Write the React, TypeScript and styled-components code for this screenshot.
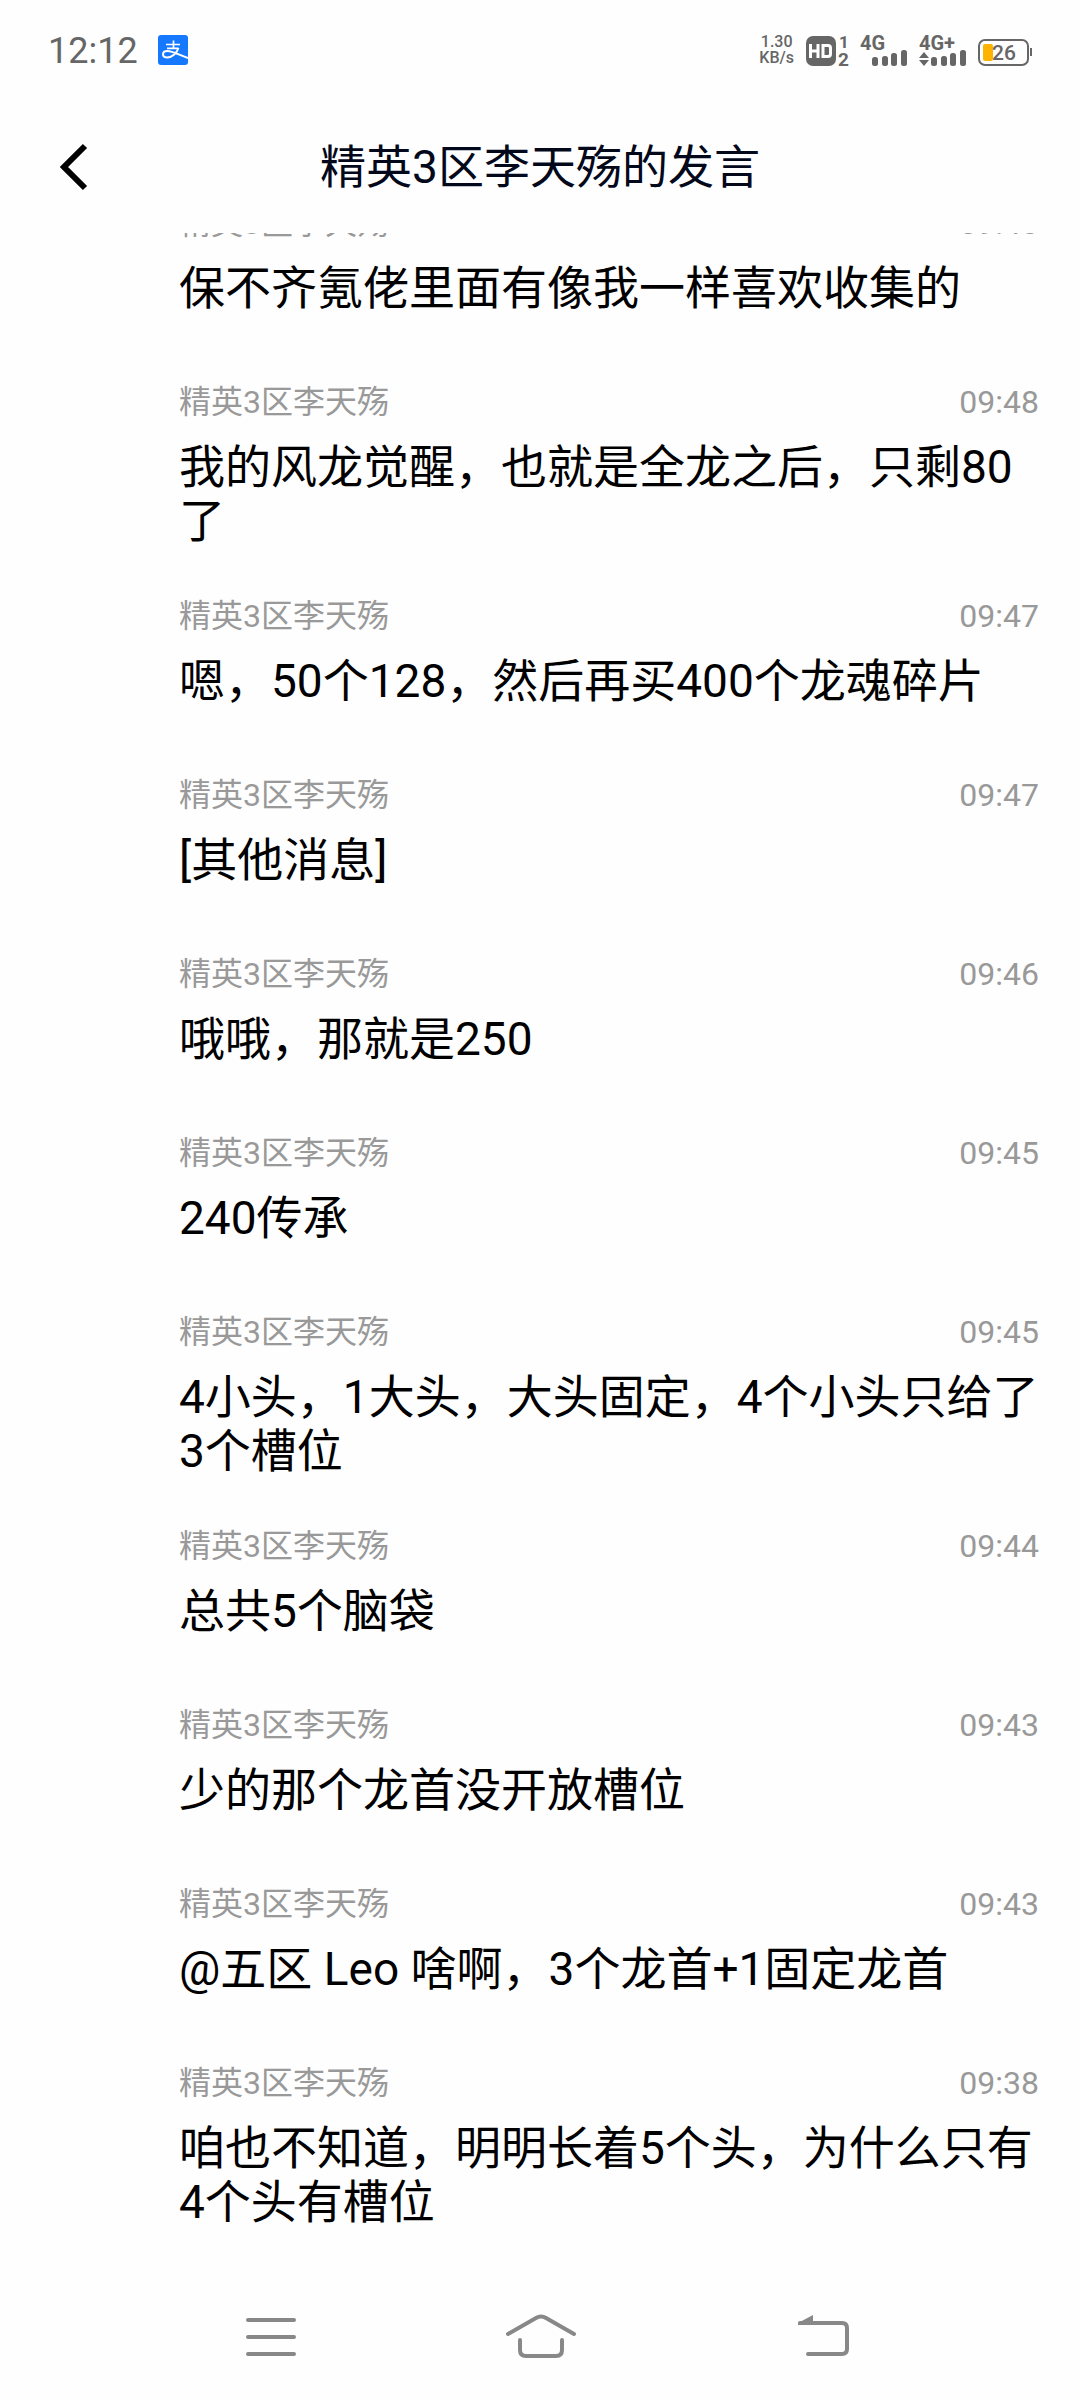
import React from "react";
import styled, { createGlobalStyle } from "styled-components";

const GlobalStyle = createGlobalStyle`
  * { box-sizing: border-box; }
  body { margin: 0; background: #fefefe; }
`;

const Screen = styled.div`
  display: flex;
  flex-direction: column;
  min-height: 100vh;
  background: #fefefe;
  font-family: Roboto, "Noto Sans CJK SC", sans-serif;
  color: #000;
`;

const StatusBar = styled.div`
  display: flex;
  align-items: center;
  justify-content: space-between;
  height: 100px;
  padding: 0 48px;
  color: #666;
`;

const StatusGroup = styled.div<{ $gap: number }>`
  display: flex;
  align-items: center;
  gap: ${(p) => p.$gap}px;
`;

const Clock = styled.time`
  padding-top: 1px;
  font-size: 36px;
  line-height: 44px;
`;

const NetSpeed = styled.div`
  display: flex;
  flex-direction: column;
  align-items: center;
  font-size: 16px;
  line-height: 16px;
  font-weight: 500;
`;

const Icon = styled.svg`
  display: block;
  flex: none;
  overflow: visible;
`;

const IconText = styled.text`
  font-family: Roboto, sans-serif;
  font-weight: 700;
  fill: #666;
`;

const BatteryLevel = styled(IconText)`
  font-weight: 500;
`;

const Header = styled.header`
  display: grid;
  grid-template-columns: 120px 1fr 120px;
  align-items: center;
  height: 133px;
`;

const BackButton = styled.button`
  display: flex;
  padding: 12px 0 12px 48px;
  border: 0;
  background: none;
`;

const Title = styled.h1`
  margin: 0;
  text-align: center;
  font-size: 46px;
  line-height: 54px;
  font-weight: 400;
  color: #03081a;
`;

const Viewport = styled.main`
  flex: 1;
  overflow: hidden;
`;

const MessageList = styled.ul`
  margin: -53px 0 0;
  padding: 0 40px 0 179px;
  list-style: none;
`;

const MessageItem = styled.li`
  min-height: 179px;
  padding: 24px 0 25px;
`;

const Meta = styled.div`
  display: flex;
  justify-content: space-between;
  margin-bottom: 19px;
  padding-right: 1px;
  font-size: 32px;
  line-height: 38px;
  color: #999;
`;

const Body = styled.p`
  margin: 0;
  font-size: 46px;
  line-height: 54px;
`;

const NavBar = styled.nav`
  display: grid;
  grid-template-columns: repeat(3, 276px);
  justify-content: center;
  align-items: center;
  height: 126px;
`;

const NavButton = styled.button`
  display: flex;
  justify-content: center;
  padding: 0;
  border: 0;
  background: none;
`;

const AUTHOR = "精英3区李天殇";

const messages = [
  { time: "09:48", text: "保不齐氪佬里面有像我一样喜欢收集的" },
  { time: "09:48", text: "我的风龙觉醒，也就是全龙之后，只剩80了" },
  { time: "09:47", text: "嗯，50个128，然后再买400个龙魂碎片" },
  { time: "09:47", text: "[其他消息]" },
  { time: "09:46", text: "哦哦，那就是250" },
  { time: "09:45", text: "240传承" },
  { time: "09:45", text: "4小头，1大头，大头固定，4个小头只给了3个槽位" },
  { time: "09:44", text: "总共5个脑袋" },
  { time: "09:43", text: "少的那个龙首没开放槽位" },
  { time: "09:43", text: "@五区 Leo 啥啊，3个龙首+1固定龙首" },
  { time: "09:38", text: "咱也不知道，明明长着5个头，为什么只有4个头有槽位" },
];

function AlipayIcon() {
  return (
    <Icon width="30" height="30" viewBox="0 0 30 30">
      <rect width="30" height="30" rx="3" fill="#1677ff" />
      <g fill="none" stroke="#fff" strokeWidth="2">
        <path d="M8 9.500H22M15.500 5.500V13M9 13.300H20.500" strokeWidth="1.700" />
        <path d="M20.500 13C18.500 18.500 14 22.500 9.500 22.500C3.500 22.500 3.500 16 9.500 16C14.500 16 21 20 30 23" />
      </g>
    </Icon>
  );
}

function HdIcon() {
  return (
    <Icon width="42" height="44" viewBox="0 0 42 44">
      <rect x="0" y="8" width="30" height="30" rx="7" fill="#666" />
      <path
        d="M4.500 16V30M12 16V30M4.500 23H12M17 17.500H22Q24.500 17.500 24.500 20V26Q24.500 28.500 22 28.500H17Z"
        fill="none"
        stroke="#fff"
        strokeWidth="3"
      />
      <IconText x="33" y="20" fontSize="17">1</IconText>
      <IconText x="32" y="38" fontSize="19">2</IconText>
    </Icon>
  );
}

function SignalIcon({ label, data }: { label: string; data?: boolean }) {
  return (
    <Icon width="47" height="44" viewBox="0 0 47 44">
      <IconText x="0" y="22" fontSize="20">{label}</IconText>
      {data && <path d="M0 30L5 24L10 30ZM0 32L5 38L10 32Z" fill="#666" />}
      <g fill="#666">
        <rect x="12" y="29" width="6" height="9" rx="2.500" />
        <rect x="22" y="28" width="6" height="10" rx="2.500" />
        <rect x="31" y="25" width="6" height="13" rx="2.500" />
        <rect x="41" y="22" width="6" height="16" rx="2.500" />
      </g>
    </Icon>
  );
}

function BatteryIcon() {
  return (
    <Icon width="54" height="44" viewBox="0 0 54 44">
      <rect x="1" y="12" width="49" height="25" rx="6" fill="none" stroke="#666" strokeWidth="2" />
      <rect x="5" y="16" width="10" height="17" rx="2" fill="#fcb400" />
      <rect x="52" y="20" width="2" height="8" fill="#666" />
      <BatteryLevel x="14" y="32" fontSize="21">26</BatteryLevel>
    </Icon>
  );
}

export default function App() {
  return (
    <Screen>
      <GlobalStyle />
      <StatusBar>
        <StatusGroup $gap={20}>
          <Clock>12:12</Clock>
          <AlipayIcon />
        </StatusGroup>
        <StatusGroup $gap={12}>
          <NetSpeed>
            <span>1.30</span>
            <span>KB/s</span>
          </NetSpeed>
          <HdIcon />
          <SignalIcon label="4G" />
          <SignalIcon label="4G+" data />
          <BatteryIcon />
        </StatusGroup>
      </StatusBar>
      <Header>
        <BackButton aria-label="返回">
          <Icon width="52" height="48" viewBox="0 0 52 48">
            <path d="M37 3L16 24L37 45" fill="none" stroke="#000" strokeWidth="6" />
          </Icon>
        </BackButton>
        <Title>精英3区李天殇的发言</Title>
      </Header>
      <Viewport>
        <MessageList>
          {messages.map((m, i) => (
            <MessageItem key={i}>
              <Meta>
                <span>{AUTHOR}</span>
                <time>{m.time}</time>
              </Meta>
              <Body>{m.text}</Body>
            </MessageItem>
          ))}
        </MessageList>
      </Viewport>
      <NavBar>
        <NavButton aria-label="最近任务">
          <Icon width="80" height="60" viewBox="0 0 80 60" fill="none" stroke="#888" strokeWidth="4" strokeLinecap="round">
            <path d="M24 13H70M24 30H70M24 47H70" />
          </Icon>
        </NavButton>
        <NavButton aria-label="主页">
          <Icon width="80" height="60" viewBox="0 0 80 60" fill="none" stroke="#888" strokeWidth="4" strokeLinecap="round">
            <path d="M8 27L36 11Q41 8 46 11L74 27M20 33V43Q20 49 26 49H56Q62 49 62 43V33" />
          </Icon>
        </NavButton>
        <NavButton aria-label="返回上一级">
          <Icon width="80" height="60" viewBox="0 0 80 60" fill="none" stroke="#888" strokeWidth="4" strokeLinecap="round">
            <path d="M24 16H66Q71 16 71 21V42Q71 47 66 47H32" />
            <path d="M22 18V16L37 8V18Z" fill="#888" stroke="none" />
          </Icon>
        </NavButton>
      </NavBar>
    </Screen>
  );
}
